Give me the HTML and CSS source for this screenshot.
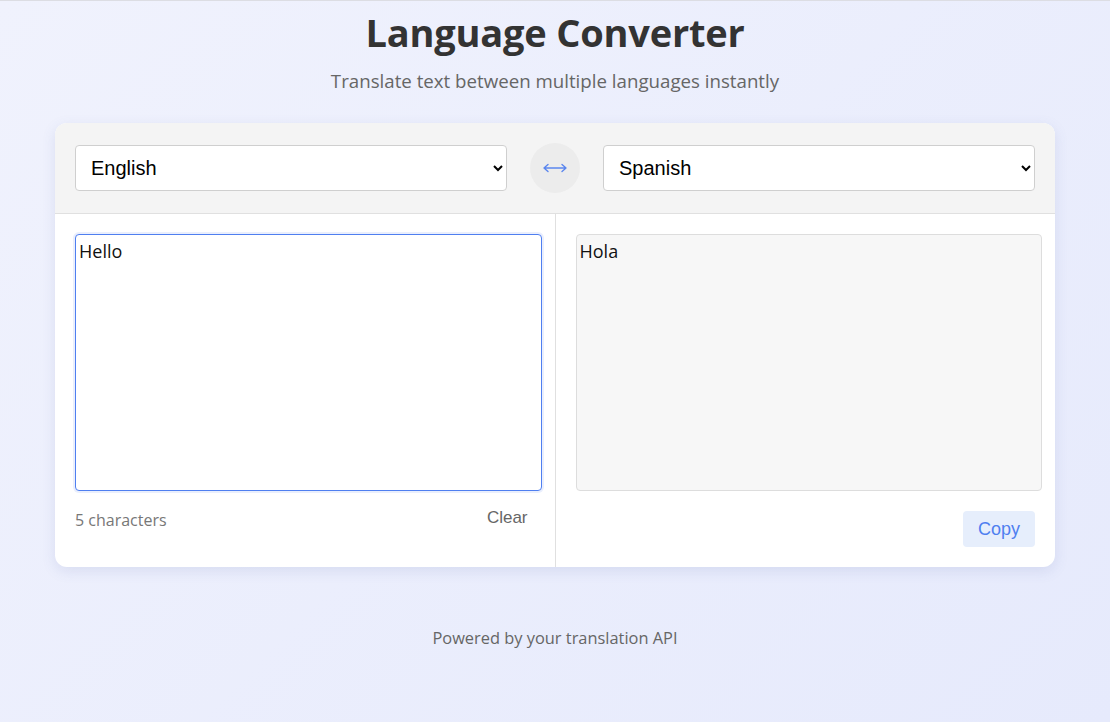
FILE: index.html
```html
<!DOCTYPE html>
<html lang="en">
<head>
<meta charset="utf-8">
<title>Language Converter</title>
<link rel="stylesheet" href="styles.css">
</head>
<body>
<div class="page">
  <header class="hero">
    <h1 class="title">Language Converter</h1>
    <p class="subtitle">Translate text between multiple languages instantly</p>
  </header>
  <main class="card">
    <div class="lang-bar">
      <select class="lang-select">
        <option>English</option>
        <option>Spanish</option>
      </select>
      <button class="swap" type="button" aria-label="Swap languages">
        <svg width="26" height="12" viewBox="0 0 26 12" fill="none" stroke="#5b86ee" stroke-width="1.4" stroke-linecap="round" stroke-linejoin="round"><path d="M2 6h22M6 2.5L2 6l4 3.5M20 2.5L24 6l-4 3.5"/></svg>
      </button>
      <select class="lang-select">
        <option>Spanish</option>
        <option>English</option>
      </select>
    </div>
    <div class="panes">
      <section class="pane pane-left">
        <textarea class="text-box input-box">Hello</textarea>
        <div class="pane-actions">
          <span class="count">5 characters</span>
          <button class="btn-clear" type="button">Clear</button>
        </div>
      </section>
      <section class="pane pane-right">
        <div class="text-box output-box">Hola</div>
        <div class="pane-actions actions-end">
          <button class="btn-copy" type="button">Copy</button>
        </div>
      </section>
    </div>
  </main>
  <footer class="footer">Powered by your translation API</footer>
</div>
</body>
</html>
```

FILE: styles.css
```css
* { box-sizing: border-box; }
html, body { height: 100%; }
body {
  margin: 0;
  border-top: 1px solid #dcdde3;
  background: linear-gradient(135deg, #f0f2fd 0%, #e6eafc 100%);
  font-family: "Segoe UI", "Open Sans", "Noto Sans", sans-serif;
  color: #333;
}
.page {
  width: 1000px;
  margin: 0 auto;
}
.hero { text-align: center; }
.title {
  margin: 0;
  padding-top: 5px;
  font-size: 38px;
  line-height: 52px;
  font-weight: 700;
  color: #333;
  letter-spacing: -0.2px;
}
.subtitle {
  margin: 11px 0 0;
  font-size: 18.7px;
  line-height: 24px;
  color: #666;
}
.card {
  margin-top: 30px;
  background: #fff;
  border-radius: 12px;
  box-shadow: 0 4px 14px rgba(80, 90, 160, 0.13);
  overflow: hidden;
}
.lang-bar {
  display: flex;
  align-items: center;
  gap: 23px;
  padding: 20px 20px 20px;
  background: #f4f4f4;
  border-bottom: 1px solid #e0e0e0;
}
.lang-select {
  flex: 1;
  height: 46px;
  padding: 0 11px;
  font-family: "Liberation Sans", Arial, sans-serif;
  font-size: 20px;
  color: #000;
  background: #fff;
  border: 1px solid #cfcfcf;
  border-radius: 4px;
}
.swap {
  flex: none;
  width: 50px;
  height: 50px;
  border: none;
  border-radius: 50%;
  background: #ececec;
  display: flex;
  align-items: center;
  justify-content: center;
  padding: 0;
}
.panes {
  display: flex;
}
.pane {
  flex: 1;
  padding: 20px 13px 20px 20px;
}
.pane-left { border-right: 1px solid #e0e0e0; }
.text-box {
  display: block;
  width: 100%;
  height: 257px;
  padding: 4px 3px;
  border-radius: 4px;
  font-family: "Segoe UI", "Open Sans", "Noto Sans", sans-serif;
  font-size: 18px;
  line-height: 24px;
  color: #111;
  resize: none;
}
.input-box {
  border: 1px solid #4f7ff0;
  box-shadow: 0 0 0 2px rgba(79, 127, 240, 0.12);
  outline: none;
  background: #fff;
}
.output-box {
  border: 1px solid #ddd;
  background: #f7f7f7;
}
.pane-actions {
  display: flex;
  justify-content: space-between;
  align-items: center;
  margin-top: 12px;
  min-height: 32px;
}
.actions-end {
  justify-content: flex-end;
  margin-top: 20px;
  padding-right: 7px;
}
.count {
  font-size: 16px;
  color: #777;
  padding-top: 2px;
}
.btn-clear {
  border: none;
  background: transparent;
  font-family: "Liberation Sans", Arial, sans-serif;
  font-size: 17px;
  color: #666;
  padding: 2px 14px 4px;
}
.btn-copy {
  height: 36px;
  padding: 0 15px;
  border: none;
  border-radius: 4px;
  background: #e6eefc;
  color: #4f7ff0;
  font-family: "Liberation Sans", Arial, sans-serif;
  font-size: 18px;
}
.footer {
  margin-top: 59px;
  text-align: center;
  font-size: 16.4px;
  color: #666;
}
```
